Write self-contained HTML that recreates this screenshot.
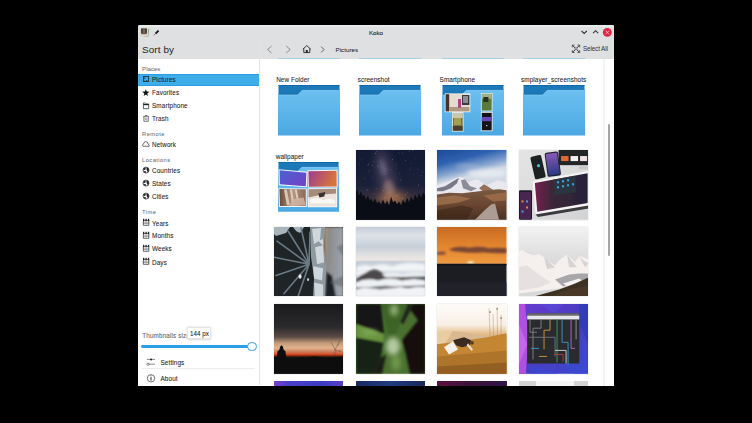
<!DOCTYPE html>
<html><head><meta charset="utf-8">
<style>
*{margin:0;padding:0;box-sizing:border-box}
html,body{width:752px;height:423px;background:#000;overflow:hidden;font-family:"Liberation Sans",sans-serif;color:#232627;position:relative}
.a{position:absolute}
.t{position:absolute;white-space:nowrap;line-height:1;-webkit-text-stroke:0.07px currentColor}
svg{position:absolute;overflow:hidden}
</style></head>
<body>

<div class="a" style="left:138px;top:25px;width:476px;height:361px;background:#ffffff;border-radius:2px 2px 0 0"></div>
<div class="a" style="left:138px;top:25px;width:476px;height:33.5px;background:#dee0e2;border-radius:2px 2px 0 0"></div>
<div class="a" style="left:138.5px;top:25px;width:475px;height:1.6px;background:#e8e9ea;border-radius:2px 2px 0 0"></div>
<div class="t" style="left:368.90px;top:29.65px;font-size:6.2px;color:#26292c;-webkit-text-stroke:0.1px currentColor;">Koko</div>
<svg style="left:576px;top:26px" width="38" height="14" viewBox="576 26 38 14">
<path d="M581.6 31 L584.2 33.5 L586.8 31" fill="none" stroke="#2e3236" stroke-width="1.05"/>
<path d="M593.1 33.2 L595.6 30.7 L598.1 33.2" fill="none" stroke="#2e3236" stroke-width="1.05"/>
<circle cx="607.3" cy="32.4" r="4.45" fill="#e0233f"/>
<path d="M605.4 30.5 L609.2 34.3 M609.2 30.5 L605.4 34.3" stroke="#f6d2d8" stroke-width="0.75"/>
</svg>
<svg style="left:139px;top:26px" width="24" height="13" viewBox="139 26 24 13">
<rect x="141" y="28.6" width="7.8" height="7.6" fill="#7a9a78" transform="rotate(8 144.4 32)"/>
<rect x="140.6" y="28.2" width="7.4" height="7.8" fill="#e9e2d6" transform="rotate(4 144.4 32)"/>
<rect x="140.5" y="28" width="7" height="7.2" fill="#d9d1c4"/>
<rect x="141.2" y="28.5" width="5.6" height="5.2" fill="#2a2522"/>
<rect x="142.6" y="29.2" width="2.8" height="4.2" fill="#7b6a5e"/>
<rect x="142.8" y="34.2" width="2.6" height="0.7" fill="#e88080"/>
<path d="M157.9 30 L159.2 31.3 L156.2 34.3 L154.9 33 Z" fill="#16191c"/>
<path d="M155.4 33.8 L153.9 35.3" stroke="#333" stroke-width="0.6"/>
</svg>
<div class="a" style="left:259px;top:40px;width:1px;height:345px;background:#e3e4e5;"></div>
<div class="t" style="left:142.10px;top:44.52px;font-size:9.9px;color:#1e2124;-webkit-text-stroke:0;letter-spacing:0.1px;">Sort by</div>
<svg style="left:262px;top:42px" width="70" height="14" viewBox="262 42 70 14">
<path d="M271.6 46 L267.6 49.5 L271.6 53" fill="none" stroke="#7b7e82" stroke-width="0.85"/>
<path d="M286.2 46 L290.2 49.5 L286.2 53" fill="none" stroke="#7b7e82" stroke-width="0.85"/>
<path d="M302.8 49.3 L306.8 45.6 L310.8 49.3 M303.8 48.5 L303.8 52.6 L309.8 52.6 L309.8 48.5" fill="none" stroke="#232627" stroke-width="0.9"/>
<rect x="305.8" y="50" width="2" height="2.7" fill="#232627"/>
<path d="M321.2 46.6 L324 49.5 L321.2 52.4" fill="none" stroke="#45494d" stroke-width="0.85"/>
</svg>
<div class="t" style="left:335.50px;top:46.75px;font-size:6.2px;color:#26292c;-webkit-text-stroke:0.05px currentColor;letter-spacing:0.05px;">Pictures</div>
<svg style="left:570px;top:42px" width="12" height="14" viewBox="570 42 12 14">
<path d="M572.8 45.6 L579.2 52 M579.2 45.6 L572.8 52" stroke="#31363b" stroke-width="1"/>
<path d="M572.3 47.3 L572.3 45.1 L574.5 45.1 M577.5 45.1 L579.7 45.1 L579.7 47.3 M579.7 50.3 L579.7 52.5 L577.5 52.5 M574.5 52.5 L572.3 52.5 L572.3 50.3" fill="none" stroke="#31363b" stroke-width="0.8"/>
<circle cx="576" cy="48.8" r="1.1" fill="#dee0e2" stroke="#31363b" stroke-width="0.5"/>
</svg>
<div class="t" style="left:583.00px;top:45.97px;font-size:6.3px;color:#2e3236;-webkit-text-stroke:0;letter-spacing:-0.12px;">Select All</div>
<div class="t" style="left:142.10px;top:66.14px;font-size:6.1px;color:#6a6e72;-webkit-text-stroke:0.04px currentColor;">Places</div>
<div class="a" style="left:138px;top:73.8px;width:121px;height:12.1px;background:#3daee9;border-top:0.7px solid #2b9de4;border-bottom:0.7px solid #2b9de4"></div>
<div class="t" style="left:152.00px;top:77.42px;font-size:6.35px;color:#232627;letter-spacing:0.12px;">Pictures</div>
<div class="t" style="left:152.00px;top:90.42px;font-size:6.35px;color:#232627;letter-spacing:0.12px;">Favorites</div>
<div class="t" style="left:152.00px;top:103.42px;font-size:6.35px;color:#232627;letter-spacing:0.12px;">Smartphone</div>
<div class="t" style="left:152.00px;top:116.42px;font-size:6.35px;color:#232627;letter-spacing:0.12px;">Trash</div>
<div class="t" style="left:152.00px;top:142.42px;font-size:6.35px;color:#232627;letter-spacing:0.12px;">Network</div>
<div class="t" style="left:152.00px;top:168.42px;font-size:6.35px;color:#232627;letter-spacing:0.12px;">Countries</div>
<div class="t" style="left:152.00px;top:181.42px;font-size:6.35px;color:#232627;letter-spacing:0.12px;">States</div>
<div class="t" style="left:152.00px;top:194.42px;font-size:6.35px;color:#232627;letter-spacing:0.12px;">Cities</div>
<div class="t" style="left:152.00px;top:220.62px;font-size:6.35px;color:#232627;letter-spacing:0.12px;">Years</div>
<div class="t" style="left:152.00px;top:233.42px;font-size:6.35px;color:#232627;letter-spacing:0.12px;">Months</div>
<div class="t" style="left:152.00px;top:246.42px;font-size:6.35px;color:#232627;letter-spacing:0.12px;">Weeks</div>
<div class="t" style="left:152.00px;top:259.52px;font-size:6.35px;color:#232627;letter-spacing:0.12px;">Days</div>
<div class="t" style="left:142.10px;top:132.19px;font-size:5.8px;color:#6a6e72;-webkit-text-stroke:0.04px currentColor;letter-spacing:0.4px;">Remote</div>
<div class="t" style="left:142.10px;top:158.19px;font-size:5.8px;color:#6a6e72;-webkit-text-stroke:0.04px currentColor;letter-spacing:0.4px;">Locations</div>
<div class="t" style="left:142.10px;top:210.29px;font-size:5.8px;color:#6a6e72;-webkit-text-stroke:0.04px currentColor;letter-spacing:0.4px;">Time</div>
<svg style="left:138px;top:70px" width="22" height="320" viewBox="138 70 22 320">
<!-- pictures -->
<rect x="143.4" y="76.5" width="5.1" height="5.1" fill="none" stroke="#1a2a33" stroke-width="0.8"/>
<path d="M143.8 78.2 L145.4 78.2" stroke="#1a2a33" stroke-width="0.9"/>
<circle cx="144.3" cy="81" r="0.6" fill="#1a2a33"/><circle cx="146.6" cy="80.5" r="0.6" fill="#1a2a33"/><circle cx="148.2" cy="81" r="0.6" fill="#1a2a33"/>
<!-- star -->
<polygon points="145.80,89.20 146.74,91.61 149.32,91.76 147.32,93.39 147.97,95.89 145.80,94.50 143.63,95.89 144.28,93.39 142.28,91.76 144.86,91.61" fill="#111"/>
<!-- folder -->
<path d="M143.4 103 L145.6 103 L146.4 103.9 L148.7 103.9 L148.7 108.7 L143.4 108.7 Z" fill="none" stroke="#232627" stroke-width="0.7"/>
<rect x="143.4" y="104" width="5.3" height="1.2" fill="#232627"/>
<!-- trash -->
<path d="M143.3 116.4 L148.9 116.4 M143.9 116.4 L143.9 121.3 L148.3 121.3 L148.3 116.4 M145 115.5 L147.2 115.5" fill="none" stroke="#3e4144" stroke-width="0.7"/>
<circle cx="146.1" cy="118.9" r="1" fill="none" stroke="#5a5d60" stroke-width="0.55"/>
<!-- cloud -->
<path d="M143 146.3 L149.2 146.3 Q149.6 144.6 148 144 Q147.8 141.6 145.7 141.5 Q144 141.6 144 143.4 Q142.4 144 142.6 145.5 Z" fill="none" stroke="#3a3d40" stroke-width="0.75" stroke-linejoin="round"/>
<circle cx="146" cy="170.1" r="3" fill="#f4f4f4" stroke="#1e2022" stroke-width="0.75"/>
<path d="M143.6 168.2 L145.3 167.7 L145.8 168.9 L144.8 169.9 L143.3 169.5 Z" fill="#1e2022"/>
<path d="M146.8 167.5 L148.4 168.5 L148.9 170.7 L147.8 172.29999999999998 L147 170.5 L146.4 168.9 Z" fill="#1e2022"/>
<path d="M144 170.9 L145.6 171.1 L146 172.7 L144.6 172.5 Z" fill="#1e2022"/><circle cx="146" cy="183.1" r="3" fill="#f4f4f4" stroke="#1e2022" stroke-width="0.75"/>
<path d="M143.6 181.2 L145.3 180.7 L145.8 181.9 L144.8 182.9 L143.3 182.5 Z" fill="#1e2022"/>
<path d="M146.8 180.5 L148.4 181.5 L148.9 183.7 L147.8 185.29999999999998 L147 183.5 L146.4 181.9 Z" fill="#1e2022"/>
<path d="M144 183.9 L145.6 184.1 L146 185.7 L144.6 185.5 Z" fill="#1e2022"/><circle cx="146" cy="196.1" r="3" fill="#f4f4f4" stroke="#1e2022" stroke-width="0.75"/>
<path d="M143.6 194.2 L145.3 193.7 L145.8 194.9 L144.8 195.9 L143.3 195.5 Z" fill="#1e2022"/>
<path d="M146.8 193.5 L148.4 194.5 L148.9 196.7 L147.8 198.29999999999998 L147 196.5 L146.4 194.9 Z" fill="#1e2022"/>
<path d="M144 196.9 L145.6 197.1 L146 198.7 L144.6 198.5 Z" fill="#1e2022"/><path d="M143.35 220.6 L148.85 220.6 L148.85 225.29999999999998 L143.35 225.29999999999998 Z" fill="none" stroke="#232627" stroke-width="0.7"/>
<rect x="143" y="218.79999999999998" width="1.3" height="2.4" fill="#232627"/><rect x="145.45" y="218.79999999999998" width="1.3" height="2.4" fill="#232627"/><rect x="147.9" y="218.79999999999998" width="1.3" height="2.4" fill="#232627"/>
<path d="M143.2 223.1 L149 223.1" stroke="#333" stroke-width="0.7"/>
<path d="M146.1 221.2 L146.1 224.99999999999997" stroke="#888" stroke-width="0.4"/><path d="M143.35 233.6 L148.85 233.6 L148.85 238.29999999999998 L143.35 238.29999999999998 Z" fill="none" stroke="#232627" stroke-width="0.7"/>
<rect x="143" y="231.79999999999998" width="1.3" height="2.4" fill="#232627"/><rect x="145.45" y="231.79999999999998" width="1.3" height="2.4" fill="#232627"/><rect x="147.9" y="231.79999999999998" width="1.3" height="2.4" fill="#232627"/>
<path d="M143.2 236.1 L149 236.1" stroke="#333" stroke-width="0.7"/>
<path d="M146.1 234.2 L146.1 237.99999999999997" stroke="#888" stroke-width="0.4"/><path d="M143.35 246.6 L148.85 246.6 L148.85 251.29999999999998 L143.35 251.29999999999998 Z" fill="none" stroke="#232627" stroke-width="0.7"/>
<rect x="143" y="244.79999999999998" width="1.3" height="2.4" fill="#232627"/><rect x="145.45" y="244.79999999999998" width="1.3" height="2.4" fill="#232627"/><rect x="147.9" y="244.79999999999998" width="1.3" height="2.4" fill="#232627"/>
<path d="M143.2 249.1 L149 249.1" stroke="#333" stroke-width="0.7"/>
<path d="M146.1 247.2 L146.1 250.99999999999997" stroke="#888" stroke-width="0.4"/><path d="M143.35 259.6 L148.85 259.6 L148.85 264.3 L143.35 264.3 Z" fill="none" stroke="#232627" stroke-width="0.7"/>
<rect x="143" y="257.8" width="1.3" height="2.4" fill="#232627"/><rect x="145.45" y="257.8" width="1.3" height="2.4" fill="#232627"/><rect x="147.9" y="257.8" width="1.3" height="2.4" fill="#232627"/>
<path d="M143.2 262.1 L149 262.1" stroke="#333" stroke-width="0.7"/>
<path d="M146.1 260.2 L146.1 264.0" stroke="#888" stroke-width="0.4"/>
<!-- settings -->
<path d="M146.8 359.4 L155 359.4 M149.1 364.2 L155 364.2" stroke="#3a3d40" stroke-width="0.6"/>
<circle cx="151.1" cy="359.4" r="1" fill="#232627"/>
<circle cx="148" cy="364.2" r="1.15" fill="#ffffff" stroke="#232627" stroke-width="0.55"/>
<!-- about -->
<circle cx="151" cy="378.3" r="3.7" fill="none" stroke="#3a3d40" stroke-width="0.7"/>
<rect x="150.55" y="377.1" width="0.9" height="3.5" fill="#111"/>
<rect x="150.55" y="375.4" width="0.9" height="0.9" fill="#333"/>
</svg>
<div class="t" style="left:142.30px;top:332.67px;font-size:6.3px;color:#5f6367;letter-spacing:0.15px;">Thumbnails size</div>
<div class="a" style="left:141px;top:345px;width:111px;height:2.8px;background:#2a9fe8;border-radius:1.4px"></div>
<div class="a" style="left:247.4px;top:341.7px;width:9.4px;height:9.4px;border-radius:50%;background:#fcfcfc;border:0.9px solid #2a9fe8"></div>
<div class="a" style="left:186.7px;top:326.6px;width:24.8px;height:12.9px;background:#ffffff;border:0.5px solid #e2e3e4;border-radius:1.2px;box-shadow:0 0.5px 2.5px rgba(0,0,0,0.16)"></div>
<div class="t" style="left:189.90px;top:330.67px;font-size:6.3px;color:#232627;">144 px</div>
<div class="a" style="left:142.3px;top:368.2px;width:113px;height:0.7px;background:#eceded;"></div>
<div class="t" style="left:160.50px;top:359.52px;font-size:6.35px;color:#232627;letter-spacing:0.12px;">Settings</div>
<div class="t" style="left:160.50px;top:376.22px;font-size:6.35px;color:#232627;letter-spacing:0.12px;">About</div>
<div class="a" style="left:277.7px;top:58.2px;width:62.2px;height:0.9px;background:#a9cfe6"></div>
<div class="a" style="left:359px;top:58.2px;width:62px;height:0.9px;background:#a9cfe6"></div>
<div class="a" style="left:441.5px;top:58.2px;width:62px;height:0.9px;background:#a9cfe6"></div>
<div class="a" style="left:523px;top:58.2px;width:62px;height:0.9px;background:#a9cfe6"></div>
<div class="t" style="left:276.20px;top:76.58px;font-size:6.4px;color:#232627;letter-spacing:0.06px">New Folder</div>
<div class="t" style="left:357.80px;top:76.58px;font-size:6.4px;color:#232627;letter-spacing:0.06px">screenshot</div>
<div class="t" style="left:439.60px;top:76.58px;font-size:6.4px;color:#232627;letter-spacing:0.06px">Smartphone</div>
<div class="t" style="left:521.10px;top:76.58px;font-size:6.4px;color:#232627;letter-spacing:0.06px">smplayer_screenshots</div>
<div class="t" style="left:275.80px;top:153.58px;font-size:6.4px;color:#232627;letter-spacing:0.06px">wallpaper</div>
<svg style="left:277px;top:84.2px" width="64.00" height="53.00" viewBox="-1 -1 64 53">
<defs><linearGradient id="fg1" x1="0" y1="0" x2="0" y2="1"><stop offset="0" stop-color="#6cc0f0"/><stop offset="1" stop-color="#4ba8e2"/></linearGradient></defs>
<rect x="0.5" y="0" width="61" height="11" fill="#1c78b7"/>
<rect x="0.5" y="0" width="61" height="0.8" fill="#0f66a8"/>
<path d="M0 9.7 L19.6 9.7 L24.2 5 L62 5 L62 50.6 L0 50.6 Z" fill="url(#fg1)"/>
<path d="M0 9.9 L19.7 9.9 L24.3 5.2 L62 5.2" fill="none" stroke="#88d0f7" stroke-width="0.6"/>
<path d="M0 9.3 L19.3 9.3 L24 4.6 L62 4.6" fill="none" stroke="#0e5f9c" stroke-width="0.5" opacity="0.6"/>

</svg>
<svg style="left:358.4px;top:84.2px" width="64.00" height="53.00" viewBox="-1 -1 64 53">
<defs><linearGradient id="fg2" x1="0" y1="0" x2="0" y2="1"><stop offset="0" stop-color="#6cc0f0"/><stop offset="1" stop-color="#4ba8e2"/></linearGradient></defs>
<rect x="0.5" y="0" width="61" height="11" fill="#1c78b7"/>
<rect x="0.5" y="0" width="61" height="0.8" fill="#0f66a8"/>
<path d="M0 9.7 L19.6 9.7 L24.2 5 L62 5 L62 50.6 L0 50.6 Z" fill="url(#fg2)"/>
<path d="M0 9.9 L19.7 9.9 L24.3 5.2 L62 5.2" fill="none" stroke="#88d0f7" stroke-width="0.6"/>
<path d="M0 9.3 L19.3 9.3 L24 4.6 L62 4.6" fill="none" stroke="#0e5f9c" stroke-width="0.5" opacity="0.6"/>

</svg>
<svg style="left:440.8px;top:84.2px" width="64.00" height="53.00" viewBox="-1 -1 64 53">
<defs><linearGradient id="fg3" x1="0" y1="0" x2="0" y2="1"><stop offset="0" stop-color="#6cc0f0"/><stop offset="1" stop-color="#4ba8e2"/></linearGradient></defs>
<rect x="0.5" y="0" width="61" height="11" fill="#1c78b7"/>
<rect x="0.5" y="0" width="61" height="0.8" fill="#0f66a8"/>
<path d="M0 9.7 L19.6 9.7 L24.2 5 L62 5 L62 50.6 L0 50.6 Z" fill="url(#fg3)"/>
<path d="M0 9.9 L19.7 9.9 L24.3 5.2 L62 5.2" fill="none" stroke="#88d0f7" stroke-width="0.6"/>
<path d="M0 9.3 L19.3 9.3 L24 4.6 L62 4.6" fill="none" stroke="#0e5f9c" stroke-width="0.5" opacity="0.6"/>

<rect x="2.8" y="8.4" width="25.5" height="18.8" fill="#f6f4f0"/>
<rect x="3.6" y="9.2" width="23.9" height="17.2" fill="#e4dcd0"/>
<rect x="3.6" y="9.2" width="3.6" height="17.2" fill="#4a3028"/>
<rect x="20" y="10" width="7.4" height="10" fill="#3a3a3c"/>
<rect x="21" y="11" width="5" height="7" fill="#8a8e90"/>
<rect x="16" y="14" width="3" height="9" fill="#b04080"/>
<rect x="7.5" y="22" width="20" height="4.4" fill="#9a7a60" opacity="0.7"/>
<rect x="10" y="27.2" width="11.5" height="19.3" fill="#f6f4f0"/>
<rect x="10.8" y="28" width="9.9" height="17.7" fill="#7a7040"/>
<rect x="10.8" y="28" width="9.9" height="5" fill="#c8c8b0"/>
<rect x="12" y="33" width="7" height="7" fill="#a0a050"/>
<rect x="10.8" y="41" width="9.9" height="4.7" fill="#4a4028"/>
<g transform="translate(38.9 8)">
<rect x="0" y="0" width="11.6" height="18.4" fill="#f6f4f0"/>
<rect x="0.8" y="0.8" width="10" height="16.8" fill="#5a7a38"/>
<rect x="0.8" y="0.8" width="10" height="5" fill="#a0b088"/>
<rect x="2.5" y="4" width="5" height="5" fill="#2a3020"/>
</g>
<g transform="translate(38.9 27)">
<rect x="0" y="0" width="11.6" height="19.2" fill="#f6f4f0"/>
<rect x="0.8" y="0.8" width="10" height="17.6" fill="#141418"/>
<rect x="0.8" y="5" width="10" height="4.2" fill="#6a48b8"/>
<rect x="5.2" y="13" width="1.2" height="1.2" fill="#ddd"/>
</g>
</svg>
<svg style="left:521.9px;top:84.2px" width="64.00" height="53.00" viewBox="-1 -1 64 53">
<defs><linearGradient id="fg4" x1="0" y1="0" x2="0" y2="1"><stop offset="0" stop-color="#6cc0f0"/><stop offset="1" stop-color="#4ba8e2"/></linearGradient></defs>
<rect x="0.5" y="0" width="61" height="11" fill="#1c78b7"/>
<rect x="0.5" y="0" width="61" height="0.8" fill="#0f66a8"/>
<path d="M0 9.7 L19.6 9.7 L24.2 5 L62 5 L62 50.6 L0 50.6 Z" fill="url(#fg4)"/>
<path d="M0 9.9 L19.7 9.9 L24.3 5.2 L62 5.2" fill="none" stroke="#88d0f7" stroke-width="0.6"/>
<path d="M0 9.3 L19.3 9.3 L24 4.6 L62 4.6" fill="none" stroke="#0e5f9c" stroke-width="0.5" opacity="0.6"/>

</svg>
<svg style="left:277.4px;top:161.3px" width="63.04" height="52.20" viewBox="-1 -1 64 53">
<defs><linearGradient id="fg5" x1="0" y1="0" x2="0" y2="1"><stop offset="0" stop-color="#6cc0f0"/><stop offset="1" stop-color="#4ba8e2"/></linearGradient></defs>
<rect x="0.5" y="0" width="61" height="11" fill="#1c78b7"/>
<rect x="0.5" y="0" width="61" height="0.8" fill="#0f66a8"/>
<path d="M0 9.7 L19.6 9.7 L24.2 5 L62 5 L62 50.6 L0 50.6 Z" fill="url(#fg5)"/>
<path d="M0 9.9 L19.7 9.9 L24.3 5.2 L62 5.2" fill="none" stroke="#88d0f7" stroke-width="0.6"/>
<path d="M0 9.3 L19.3 9.3 L24 4.6 L62 4.6" fill="none" stroke="#0e5f9c" stroke-width="0.5" opacity="0.6"/>

<defs>
<linearGradient id="w1" x1="0" y1="0" x2="1" y2="1"><stop offset="0" stop-color="#4a62d4"/><stop offset="1" stop-color="#7440c4"/></linearGradient>
<linearGradient id="w2" x1="0" y1="0" x2="1" y2="0.3"><stop offset="0" stop-color="#9c3a94"/><stop offset="1" stop-color="#d8743c"/></linearGradient>
<linearGradient id="w3" x1="0" y1="0" x2="1" y2="0"><stop offset="0" stop-color="#6a4a38"/><stop offset="0.5" stop-color="#b89880"/><stop offset="1" stop-color="#8a6a58"/></linearGradient>
</defs>
<path d="M0.6 7.4 L29.8 10 L29.2 25.6 L0.9 23.6 Z" fill="#f6f6f6"/>
<path d="M1.6 8.5 L28.8 10.9 L28.2 24.6 L1.9 22.6 Z" fill="url(#w1)"/>
<path d="M30 8.4 L60.4 7.8 L60.6 25.8 L30.4 26 Z" fill="#f6f6f6"/>
<path d="M30.9 9.3 L59.5 8.8 L59.6 24.8 L31.3 25.1 Z" fill="url(#w2)"/>
<path d="M0.5 26.6 L29.2 26.9 L29.2 45.6 L1 45.8 Z" fill="#f6f6f6"/>
<path d="M1.5 27.5 L28.2 27.8 L28.2 44.6 L2 44.7 Z" fill="url(#w3)"/>
<path d="M6 28 L9 28 L12 44 L9 44 Z M12 28 L14 28 L16 40 L14 40 Z M17 28 L19 28 L21 38 L19 38 Z" fill="#e8dcd0" opacity="0.8"/>
<path d="M14 38 L26 36 L28 44 L12 44.6 Z" fill="#d4b8a8" opacity="0.8"/>
<path d="M30 26.8 L59.9 26.3 L60.1 45.9 L30.2 45.9 Z" fill="#f6f6f6"/>
<path d="M31 27.6 L59 27.2 L59.1 44.9 L31.1 44.9 Z" fill="#ece4dc"/>
<path d="M31 27.6 L59 27.2 L59 32 L45 33 L31 36 Z" fill="#9a7a68" opacity="0.85"/>
<path d="M41 32 L48 30.5 L47 35 L42 36 Z" fill="#3a3030"/>
<path d="M33 38 Q40 35 46 39 Q52 36 58 39 L58 42 L33 42 Z" fill="#faf8f6"/>

</svg>
<div class="a" style="left:356px;top:150px;width:69px;height:70px;box-shadow:0 0.3px 1.2px rgba(0,0,0,0.22)"></div>
<svg style="left:355.85px;top:149.9px" width="69.5" height="69.8" viewBox="0 0 69.4 69.2" preserveAspectRatio="none">
<defs>
<linearGradient id="mw" x1="0" y1="0" x2="0" y2="1"><stop offset="0" stop-color="#121a34"/><stop offset="0.5" stop-color="#1a2038"/><stop offset="0.7" stop-color="#3a3040"/><stop offset="0.8" stop-color="#2a2228"/><stop offset="1" stop-color="#0e0e18"/></linearGradient>
<filter id="b3" x="-80%" y="-80%" width="260%" height="260%"><feGaussianBlur stdDeviation="4"/></filter>
<filter id="b2" x="-80%" y="-80%" width="260%" height="260%"><feGaussianBlur stdDeviation="2"/></filter>
</defs>
<rect width="69.4" height="69.2" fill="url(#mw)"/>
<ellipse cx="30" cy="28" rx="9" ry="30" fill="#5a4a66" opacity="0.6" transform="rotate(-12 30 28)" filter="url(#b3)"/>
<ellipse cx="27" cy="18" rx="3" ry="9" fill="#8a88a8" opacity="0.5" transform="rotate(-12 27 18)" filter="url(#b2)"/>
<ellipse cx="33" cy="38" rx="5" ry="9" fill="#a88a80" opacity="0.6" transform="rotate(-12 33 38)" filter="url(#b2)"/>
<ellipse cx="36" cy="48" rx="14" ry="6" fill="#b87a48" opacity="0.8" filter="url(#b3)"/>
<circle cx="16.4" cy="27.2" r="0.29" fill="#cfd4ea" opacity="0.60"/><circle cx="43.2" cy="3.3" r="0.20" fill="#cfd4ea" opacity="0.72"/><circle cx="17.9" cy="11.7" r="0.45" fill="#cfd4ea" opacity="0.54"/><circle cx="57.7" cy="23.8" r="0.36" fill="#cfd4ea" opacity="0.38"/><circle cx="43.8" cy="43.4" r="0.33" fill="#cfd4ea" opacity="0.67"/><circle cx="46.3" cy="3.2" r="0.39" fill="#cfd4ea" opacity="0.60"/><circle cx="20.8" cy="1.6" r="0.42" fill="#cfd4ea" opacity="0.54"/><circle cx="49.6" cy="43.9" r="0.38" fill="#cfd4ea" opacity="0.76"/><circle cx="27.3" cy="40.0" r="0.31" fill="#cfd4ea" opacity="0.77"/><circle cx="60.6" cy="4.9" r="0.23" fill="#cfd4ea" opacity="0.41"/><circle cx="66.6" cy="21.8" r="0.36" fill="#cfd4ea" opacity="0.45"/><circle cx="35.0" cy="19.3" r="0.29" fill="#cfd4ea" opacity="0.59"/><circle cx="40.3" cy="45.2" r="0.37" fill="#cfd4ea" opacity="0.76"/><circle cx="59.1" cy="49.5" r="0.37" fill="#cfd4ea" opacity="0.38"/><circle cx="59.4" cy="48.2" r="0.43" fill="#cfd4ea" opacity="0.58"/><circle cx="49.3" cy="10.6" r="0.41" fill="#cfd4ea" opacity="0.59"/><circle cx="19.7" cy="3.2" r="0.41" fill="#cfd4ea" opacity="0.79"/><circle cx="6.1" cy="40.0" r="0.30" fill="#cfd4ea" opacity="0.38"/><circle cx="20.3" cy="38.4" r="0.42" fill="#cfd4ea" opacity="0.32"/><circle cx="42.4" cy="2.2" r="0.38" fill="#cfd4ea" opacity="0.47"/><circle cx="60.8" cy="49.0" r="0.33" fill="#cfd4ea" opacity="0.80"/><circle cx="21.4" cy="3.8" r="0.35" fill="#cfd4ea" opacity="0.32"/><circle cx="13.6" cy="20.4" r="0.35" fill="#cfd4ea" opacity="0.38"/><circle cx="2.9" cy="43.4" r="0.28" fill="#cfd4ea" opacity="0.78"/><circle cx="61.9" cy="18.9" r="0.32" fill="#cfd4ea" opacity="0.56"/><circle cx="44.4" cy="29.8" r="0.34" fill="#cfd4ea" opacity="0.61"/><circle cx="64.9" cy="25.4" r="0.31" fill="#cfd4ea" opacity="0.66"/><circle cx="16.4" cy="15.1" r="0.44" fill="#cfd4ea" opacity="0.56"/><circle cx="37.8" cy="0.6" r="0.30" fill="#cfd4ea" opacity="0.59"/><circle cx="1.4" cy="30.8" r="0.36" fill="#cfd4ea" opacity="0.33"/><circle cx="43.3" cy="23.3" r="0.37" fill="#cfd4ea" opacity="0.48"/><circle cx="48.8" cy="36.9" r="0.21" fill="#cfd4ea" opacity="0.33"/><circle cx="46.6" cy="48.2" r="0.26" fill="#cfd4ea" opacity="0.53"/><circle cx="40.9" cy="16.0" r="0.29" fill="#cfd4ea" opacity="0.46"/><circle cx="25.5" cy="29.8" r="0.28" fill="#cfd4ea" opacity="0.49"/><circle cx="53.3" cy="1.3" r="0.34" fill="#cfd4ea" opacity="0.67"/><circle cx="21.4" cy="11.1" r="0.40" fill="#cfd4ea" opacity="0.42"/><circle cx="12.9" cy="21.8" r="0.37" fill="#cfd4ea" opacity="0.35"/><circle cx="22.2" cy="16.7" r="0.41" fill="#cfd4ea" opacity="0.52"/><circle cx="59.0" cy="8.5" r="0.28" fill="#cfd4ea" opacity="0.63"/><circle cx="61.1" cy="22.6" r="0.26" fill="#cfd4ea" opacity="0.36"/><circle cx="36.5" cy="9.5" r="0.40" fill="#cfd4ea" opacity="0.72"/><circle cx="12.7" cy="13.9" r="0.40" fill="#cfd4ea" opacity="0.62"/><circle cx="55.6" cy="17.3" r="0.23" fill="#cfd4ea" opacity="0.45"/><circle cx="54.8" cy="13.6" r="0.29" fill="#cfd4ea" opacity="0.51"/><circle cx="29.0" cy="20.5" r="0.43" fill="#cfd4ea" opacity="0.38"/><circle cx="0.3" cy="47.2" r="0.42" fill="#cfd4ea" opacity="0.79"/><circle cx="30.0" cy="47.5" r="0.43" fill="#cfd4ea" opacity="0.41"/><circle cx="51.4" cy="41.8" r="0.37" fill="#cfd4ea" opacity="0.56"/><circle cx="19.9" cy="17.1" r="0.26" fill="#cfd4ea" opacity="0.33"/><circle cx="40.6" cy="14.4" r="0.40" fill="#cfd4ea" opacity="0.32"/><circle cx="62.3" cy="34.7" r="0.43" fill="#cfd4ea" opacity="0.75"/><circle cx="62.1" cy="28.8" r="0.20" fill="#cfd4ea" opacity="0.67"/><circle cx="11.9" cy="15.0" r="0.37" fill="#cfd4ea" opacity="0.56"/><circle cx="28.5" cy="47.0" r="0.35" fill="#cfd4ea" opacity="0.47"/><circle cx="17.4" cy="43.1" r="0.32" fill="#cfd4ea" opacity="0.69"/><circle cx="24.3" cy="9.9" r="0.33" fill="#cfd4ea" opacity="0.71"/><circle cx="11.8" cy="39.6" r="0.43" fill="#cfd4ea" opacity="0.70"/><circle cx="56.8" cy="0.4" r="0.36" fill="#cfd4ea" opacity="0.73"/><circle cx="3.4" cy="13.6" r="0.27" fill="#cfd4ea" opacity="0.56"/><circle cx="29.2" cy="23.6" r="0.39" fill="#cfd4ea" opacity="0.30"/><circle cx="3.8" cy="6.3" r="0.23" fill="#cfd4ea" opacity="0.33"/><circle cx="67.3" cy="42.7" r="0.22" fill="#cfd4ea" opacity="0.55"/><circle cx="21.8" cy="15.7" r="0.29" fill="#cfd4ea" opacity="0.62"/><circle cx="40.5" cy="18.0" r="0.25" fill="#cfd4ea" opacity="0.46"/><circle cx="8.5" cy="27.8" r="0.38" fill="#cfd4ea" opacity="0.49"/><circle cx="5.5" cy="8.9" r="0.29" fill="#cfd4ea" opacity="0.60"/><circle cx="54.0" cy="19.0" r="0.40" fill="#cfd4ea" opacity="0.61"/><circle cx="29.8" cy="18.6" r="0.32" fill="#cfd4ea" opacity="0.65"/><circle cx="29.0" cy="34.7" r="0.32" fill="#cfd4ea" opacity="0.42"/>
<path d="M0 69.2 L0 42 L1.5 39 L3 45 L5 41 L6.5 46 L8 44 L10 49 L12 45 L13.5 50 L15 48 L17 52 L19 48 L21 53 L23 51 L25 54 L27 49 L29 54 L31 50 L33 55 L35 46 L37 52 L39 50 L41 54 L43 51 L45 55 L47 49 L49 53 L51 47 L53 52 L55 46 L57 50 L59 44 L61 48 L63 43 L65 47 L67 42 L69.4 45 L69.4 69.2 Z" fill="#0a0c16"/>
</svg>
<div class="a" style="left:437px;top:150px;width:70px;height:70px;box-shadow:0 0.3px 1.2px rgba(0,0,0,0.22)"></div>
<svg style="left:437.25px;top:149.9px" width="69.5" height="69.8" viewBox="0 0 69.4 69.2" preserveAspectRatio="none">
<defs>
<linearGradient id="sky2" x1="0" y1="0" x2="0.25" y2="1"><stop offset="0" stop-color="#1a4a98"/><stop offset="0.2" stop-color="#2e62b0"/><stop offset="0.36" stop-color="#86a4d0"/><stop offset="0.46" stop-color="#d0d8e4"/></linearGradient>
<linearGradient id="gr2" x1="0" y1="0" x2="0" y2="1"><stop offset="0" stop-color="#7a5a44"/><stop offset="0.5" stop-color="#6a4630"/><stop offset="1" stop-color="#4a3022"/></linearGradient>
<filter id="bm" x="-20%" y="-20%" width="140%" height="140%"><feGaussianBlur stdDeviation="0.55"/></filter>
<filter id="bm2" x="-50%" y="-50%" width="200%" height="200%"><feGaussianBlur stdDeviation="2"/></filter>
</defs>
<rect width="69.4" height="69.2" fill="url(#sky2)"/>
<ellipse cx="50" cy="23" rx="20" ry="4" fill="#eef0f4" opacity="0.75" filter="url(#bm2)"/>
<ellipse cx="30" cy="16" rx="12" ry="2" fill="#a8bcd8" opacity="0.6" filter="url(#bm2)"/>
<g filter="url(#bm)">
<path d="M0 35 L6 33 L12 31 L18 28 L23 26.5 L27 28 L31 32 L36 30 L40 29 L45 32 L50 35 L56 32 L61 30 L66 31 L69.4 33 L69.4 46 L0 46 Z" fill="#e8e8ee"/>
<path d="M0 38 L8 36 L16 31 L22 27.5 L20 33 L14 38 L6 41 L0 41 Z" fill="#4a4c5c" opacity="0.7"/>
<path d="M24 30 L28 29 L33 36 L40 38 L34 41 L26 38 Z" fill="#5a5a6a" opacity="0.65"/>
<path d="M42 38 L47 34 L52 37 L58 41 L50 44 Z" fill="#8a6448" opacity="0.9"/>
<path d="M0 44 L12 42.5 L25 43 L38 41.5 L50 40 L62 39 L69.4 40 L69.4 69.2 L0 69.2 Z" fill="url(#gr2)"/>
<path d="M0 47 L18 45 L34 48 L22 52 L0 55 Z" fill="#b08058" opacity="0.6"/>
<path d="M46 45 L69.4 42 L69.4 50 L56 51 Z" fill="#b07850" opacity="0.6"/>
<path d="M0 60 L25 55 L36 58 L30 69.2 L0 69.2 Z" fill="#3a2418" opacity="0.55"/>
<path d="M38 69.2 Q47 60 54 54 L58 53 Q60 62 62 69.2 Z" fill="#ac9c94"/>
</g>
</svg>
<div class="a" style="left:519px;top:150px;width:69px;height:70px;box-shadow:0 0.3px 1.2px rgba(0,0,0,0.22)"></div>
<svg style="left:518.95px;top:149.9px" width="69.5" height="69.8" viewBox="0 0 69.4 69.2" preserveAspectRatio="none">
<defs><filter id="bp" x="-20%" y="-20%" width="140%" height="140%"><feGaussianBlur stdDeviation="0.45"/></filter>
<linearGradient id="pbg" x1="0" y1="0" x2="1" y2="1"><stop offset="0" stop-color="#e4e4e4"/><stop offset="1" stop-color="#d2d3d4"/></linearGradient>
<linearGradient id="scr" x1="0" y1="0" x2="1" y2="0"><stop offset="0" stop-color="#74204c"/><stop offset="0.35" stop-color="#3a2838"/><stop offset="1" stop-color="#262238"/></linearGradient>
<linearGradient id="ph2" x1="0" y1="0" x2="0" y2="1"><stop offset="0" stop-color="#8a58b8"/><stop offset="1" stop-color="#2a3a80"/></linearGradient></defs>
<rect width="69.4" height="69.2" fill="url(#pbg)"/>
<g filter="url(#bp)">
<rect x="13.5" y="5.5" width="11" height="23" rx="1.8" fill="#1e2124" transform="rotate(-13 19 17)"/>
<circle cx="19.5" cy="15.5" r="1.6" fill="#40c0d0"/>
<rect x="27" y="2" width="13.5" height="24" rx="1.8" fill="#1e2230" transform="rotate(-8 33.7 14)"/>
<rect x="28" y="3.2" width="11.5" height="21.6" rx="1" fill="url(#ph2)" transform="rotate(-8 33.7 14)"/>
<rect x="39.5" y="0" width="29.9" height="15" fill="#242528"/>
<rect x="42" y="6" width="7.5" height="5" fill="#e06a30"/>
<rect x="51.5" y="6" width="7.5" height="5" fill="#f2f2f2"/>
<rect x="61" y="6" width="7" height="5" fill="#f2e2e4"/>
<rect x="60" y="16" width="9.4" height="3" fill="#c8c8cc"/>
<path d="M13.5 31 L69.4 20.5 L69.4 55 L16.5 64 Z" fill="#f4f4f4"/>
<path d="M15.8 32.6 L68.5 23 L68.5 52.6 L18.3 61.3 Z" fill="url(#scr)"/>
<path d="M34 29.5 L56 25.5 L57 42 L35 45 Z" fill="#2c3440"/>
<g fill="#3aa8e8"><rect x="38" y="31" width="2" height="2"/><rect x="43" y="30" width="2" height="2"/><rect x="48" y="29" width="2" height="2"/><rect x="38" y="36" width="2" height="2"/><rect x="43" y="35" width="2" height="2"/><rect x="48" y="34" width="2" height="2"/><rect x="53" y="33" width="2" height="2"/></g>
<path d="M16.5 64 L69.4 55 L69.4 58 L19 66.5 Z" fill="#3a3a3e"/>
<rect x="0" y="40" width="13" height="29.2" rx="1.2" fill="#1e1a28"/>
<rect x="1" y="41.5" width="11" height="27" fill="#4a2850"/>
<g fill="#e88040"><rect x="2.5" y="50" width="2" height="2"/><rect x="7" y="56" width="2" height="2"/></g>
<g fill="#40a0e8"><rect x="7" y="50" width="2" height="2"/><rect x="2.5" y="60" width="2" height="2"/></g>
</g>
</svg>
<div class="a" style="left:274px;top:227px;width:69px;height:69px;box-shadow:0 0.3px 1.2px rgba(0,0,0,0.22)"></div>
<svg style="left:273.95px;top:226.65px" width="69.5" height="69.8" viewBox="0 0 69.4 69.2" preserveAspectRatio="none">
<defs><filter id="bi" x="-20%" y="-20%" width="140%" height="140%"><feGaussianBlur stdDeviation="0.6"/></filter>
<filter id="bi2" x="-20%" y="-20%" width="140%" height="140%"><feGaussianBlur stdDeviation="1.2"/></filter>
<linearGradient id="isky" x1="0" y1="0" x2="1" y2="0.2"><stop offset="0" stop-color="#c8945a"/><stop offset="0.25" stop-color="#8a8a8c"/><stop offset="1" stop-color="#9ea4aa"/></linearGradient></defs>
<rect width="69.4" height="69.2" fill="#1f2427"/>
<g filter="url(#bi2)">
<rect x="50" y="0" width="19.4" height="69.2" fill="url(#isky)"/>
<path d="M52 44 L58 48 L62 69.2 L51 69.2 Z" fill="#1e242c"/>
<path d="M63 20 L69.4 16 L69.4 30 Z M56 55 L69 48 L69.4 60 Z" fill="#6a7078" opacity="0.7"/>
</g>
<g filter="url(#bi)">
<path d="M36 0 L51 0 L50 20 L52 40 L51 69.2 L39 69.2 L40 50 L37 30 Z" fill="#8e9aa2"/>
<path d="M38 2 L47 1 L46 13 L40 17 Z M41 20 L49 18 L50 35 L43 37 Z M39 39 L49 41 L48 53 L40 51 Z M40 55 L49 57 L49 69 L41 69 Z M44 14 L49 12 L49 18 Z" fill="#cfd7dc"/>
<path d="M0 0 L16 0 L12 6 L2 9 L0 7 Z M19 0 L30 0 L26 6 L22 4 Z" fill="#a9b4ba"/>
<g stroke="#6a7a84" stroke-width="1.6" fill="none" stroke-linecap="round">
<path d="M35 37 L3 14 M35 37 L0 30 M35 37 L2 48 M35 37 L10 66 M35 37 L24 69 M35 37 L14 4 M35 37 L27 1 M35 37 L36 5"/>
</g>
<ellipse cx="26" cy="49" rx="1.5" ry="2.2" fill="#e6ecf0"/>
<ellipse cx="34" cy="52" rx="1" ry="1.5" fill="#d0d8dc"/>
</g>
</svg>
<div class="a" style="left:356px;top:227px;width:69px;height:69px;box-shadow:0 0.3px 1.2px rgba(0,0,0,0.22)"></div>
<svg style="left:355.85px;top:226.65px" width="69.5" height="69.8" viewBox="0 0 69.4 69.2" preserveAspectRatio="none">
<defs><filter id="bc" x="-20%" y="-20%" width="140%" height="140%"><feGaussianBlur stdDeviation="0.8"/></filter>
<filter id="bc2" x="-20%" y="-20%" width="140%" height="140%"><feGaussianBlur stdDeviation="1.4"/></filter>
<linearGradient id="csky" x1="0" y1="0" x2="0" y2="1"><stop offset="0" stop-color="#c4ccd8"/><stop offset="0.12" stop-color="#dde2e8"/><stop offset="0.28" stop-color="#c6ced8"/><stop offset="0.4" stop-color="#e0e0e2"/><stop offset="0.47" stop-color="#ece6e2"/><stop offset="0.5" stop-color="#c4ccd8"/><stop offset="1" stop-color="#c8d0da"/></linearGradient></defs>
<rect width="69.4" height="69.2" fill="url(#csky)"/>
<g filter="url(#bc2)">
<path d="M0 40 Q8 36 16 39 Q26 35 36 39 Q50 33 69.4 37 L69.4 44 L0 44 Z" fill="#f2f4f6"/>
</g>
<g filter="url(#bc)">
<path d="M0 52 L6 47 L12 44 L18 42 L22 43 L27 46 L34 48 L44 47 L54 48 L62 49 L69.4 48 L69.4 60 L0 62 Z" fill="#4e4a4c"/>
<path d="M50 50 L69.4 49 L69.4 56 L54 56 Z" fill="#3a404c"/>
<path d="M0 44 Q6 41 12 44 L4 48 L0 48 Z" fill="#eef0f4"/>
<path d="M26 47 Q36 43 46 46 Q56 43 69.4 45 L69.4 49 L30 50 Z" fill="#e8ecf0"/>
<path d="M0 55 Q10 50 22 53 Q34 49 46 53 Q58 50 69.4 53 L69.4 58 L0 60 Z" fill="#eef1f4"/>
<path d="M0 62 Q12 58 24 61 Q38 57 52 61 Q62 58 69.4 60 L69.4 69.2 L0 69.2 Z" fill="#f0f2f5"/>
<path d="M8 60 L30 58 L44 60 L24 62 Z" fill="#5a5658" opacity="0.7"/>
</g>
</svg>
<div class="a" style="left:437px;top:227px;width:70px;height:69px;box-shadow:0 0.3px 1.2px rgba(0,0,0,0.22)"></div>
<svg style="left:437.25px;top:226.65px" width="69.5" height="69.8" viewBox="0 0 69.4 69.2" preserveAspectRatio="none">
<defs><linearGradient id="ss" x1="0" y1="0" x2="0" y2="1"><stop offset="0" stop-color="#c96a22"/><stop offset="0.5" stop-color="#e2852e"/><stop offset="1" stop-color="#f09a40"/></linearGradient>
<filter id="bs" x="-20%" y="-50%" width="140%" height="200%"><feGaussianBlur stdDeviation="0.8"/></filter></defs>
<rect width="69.4" height="36.5" fill="url(#ss)"/>
<g filter="url(#bs)">
<path d="M12 22 Q22 18 32 20.5 Q42 18.5 52 21 Q60 20 69.4 21 L69.4 26 Q56 26.5 46 25 Q34 26.5 22 24.5 Q14 24 12 22 Z" fill="#7a4632"/>
<path d="M0 25 Q5 23.5 9 25 L8 27.5 L0 27.5 Z" fill="#84503a"/>
<ellipse cx="33.5" cy="35.5" rx="3.2" ry="1.6" fill="#fff2c8"/>
</g>
<rect y="36.5" width="69.4" height="32.7" fill="#1c1d23"/>
<rect y="36.5" width="69.4" height="1.5" fill="#111217"/>
<rect y="55" width="69.4" height="14.2" fill="#22232a" opacity="0.8"/>
</svg>
<div class="a" style="left:519px;top:227px;width:69px;height:69px;box-shadow:0 0.3px 1.2px rgba(0,0,0,0.22)"></div>
<svg style="left:518.95px;top:226.65px" width="69.5" height="69.8" viewBox="0 0 69.4 69.2" preserveAspectRatio="none">
<defs><filter id="bw" x="-20%" y="-20%" width="140%" height="140%"><feGaussianBlur stdDeviation="0.7"/></filter>
<linearGradient id="wsky" x1="0" y1="0" x2="0" y2="1"><stop offset="0" stop-color="#f2f2f2"/><stop offset="0.45" stop-color="#dcdcdc"/><stop offset="1" stop-color="#d8d8d8"/></linearGradient></defs>
<rect width="69.4" height="69.2" fill="url(#wsky)"/>
<g filter="url(#bw)">
<path d="M0 24 L3 22.5 L8 26 L14 28 L20 27 L25 30 L30 35 L36 38 L40 33 L44 30 L48 27 L52 31 L56 35 L60 29 L64 30 L69.4 32 L69.4 54 L40 61 L0 66 Z" fill="#f5f0ee"/>
<path d="M25 30 L30 35 L36 40 L28 42 Z M48 27 L52 33 L58 40 L50 40 Z M60 29 L64 33 L69.4 36 L66 40 Z" fill="#cfcbcc" opacity="0.8"/>
<path d="M0 40 L8 38 L16 44 L24 50 L32 55 L20 60 L0 63 Z" fill="#e2dcdc" opacity="0.8"/>
<path d="M36 52 L50 47 L60 46 L69.4 46 L69.4 52 L44 59 Z" fill="#a8a6a8"/>
<path d="M44 56 L60 51 L64 54 L50 60 Z" fill="#f4f2f2"/>
<path d="M14 69.2 L40 62 L56 56 L69.4 50 L69.4 69.2 Z" fill="#3e3024"/>
<path d="M30 69.2 L50 62 L69.4 58 L69.4 69.2 Z" fill="#54402a" opacity="0.6"/>
</g>
</svg>
<div class="a" style="left:274px;top:304px;width:69px;height:70px;box-shadow:0 0.3px 1.2px rgba(0,0,0,0.22)"></div>
<svg style="left:273.95px;top:303.8px" width="69.5" height="69.8" viewBox="0 0 69.4 69.2" preserveAspectRatio="none">
<defs><linearGradient id="sil" x1="0" y1="0" x2="0" y2="1"><stop offset="0" stop-color="#1a1a1c"/><stop offset="0.33" stop-color="#2a2a2c"/><stop offset="0.47" stop-color="#5a4a44"/><stop offset="0.56" stop-color="#c49a7a"/><stop offset="0.63" stop-color="#e2b48c"/><stop offset="0.69" stop-color="#c87858"/><stop offset="0.72" stop-color="#e04a20"/><stop offset="0.75" stop-color="#5a2010"/><stop offset="0.77" stop-color="#0e0e0e"/></linearGradient>
<filter id="bsl" x="-20%" y="-20%" width="140%" height="140%"><feGaussianBlur stdDeviation="0.5"/></filter></defs>
<rect width="69.4" height="69.2" fill="url(#sil)"/>

<g filter="url(#bsl)">
<path d="M0 53 L20 54 L40 52 L55 53 L69.4 52 L69.4 69.2 L0 69.2 Z" fill="#0d0d0d"/>
<path d="M2.5 56 L3.5 47 L5.5 45 L6 42.5 L7.5 41 L9 42.5 L9.5 45 L11.5 47 L12.5 56 Z" fill="#0d0d0d"/>
<path d="M57 38 L61 45 L65 39 M60.5 53 L61 44 M61 46 L67 47 M63 41 L66 36" stroke="#3a3030" stroke-width="0.45" fill="none" opacity="0.8"/>
</g>
</svg>
<div class="a" style="left:356px;top:304px;width:69px;height:70px;box-shadow:0 0.3px 1.2px rgba(0,0,0,0.22)"></div>
<svg style="left:355.85px;top:303.8px" width="69.5" height="69.8" viewBox="0 0 69.4 69.2" preserveAspectRatio="none">
<defs><filter id="bf" x="-20%" y="-20%" width="140%" height="140%"><feGaussianBlur stdDeviation="0.8"/></filter>
<filter id="bf2" x="-50%" y="-50%" width="200%" height="200%"><feGaussianBlur stdDeviation="2.5"/></filter></defs>
<rect width="69.4" height="69.2" fill="#4a7030"/>
<g filter="url(#bf)">
<path d="M25 0 L52 0 L46 14 L40 30 L32 30 Z" fill="#3e6428"/>
<path d="M0 0 L25 0 L28 30 L0 20 Z" fill="#121712"/>
<path d="M0 33 L27 38 L25 52 L17 69.2 L0 69.2 Z" fill="#152016"/>
<path d="M50 0 L69.4 0 L69.4 69.2 L54 69.2 L50 50 L46 36 L62 16 Z" fill="#14110e"/>
<path d="M52 0 L58 0 L47 20 L44 18 Z" fill="#22201a"/>
<path d="M17 69.2 L24 54 L30 50 L26 69.2 Z" fill="#1a1c14"/>
<path d="M0 20 L28 30 L27 38 L0 33 Z" fill="#6a9440"/>
</g>
<ellipse cx="37" cy="42" rx="7" ry="9" fill="#d8e8c8" opacity="0.75" filter="url(#bf2)"/>
<ellipse cx="38" cy="6" rx="4" ry="6" fill="#b8d0a0" opacity="0.7" filter="url(#bf2)"/>
<ellipse cx="40" cy="58" rx="5" ry="8" fill="#8ab060" opacity="0.6" filter="url(#bf2)"/>
<ellipse cx="14" cy="28" rx="8" ry="3" fill="#8ab860" opacity="0.6" filter="url(#bf2)"/>
</svg>
<div class="a" style="left:437px;top:304px;width:70px;height:70px;box-shadow:0 0.3px 1.2px rgba(0,0,0,0.22)"></div>
<svg style="left:437.25px;top:303.8px" width="69.5" height="69.8" viewBox="0 0 69.4 69.2" preserveAspectRatio="none">
<defs><linearGradient id="gf" x1="0" y1="0" x2="0" y2="1"><stop offset="0" stop-color="#fdfbf8"/><stop offset="0.3" stop-color="#f8efe4"/><stop offset="0.42" stop-color="#e6c090"/><stop offset="0.6" stop-color="#c88a38"/><stop offset="1" stop-color="#9a6428"/></linearGradient>
<filter id="bg" x="-20%" y="-20%" width="140%" height="140%"><feGaussianBlur stdDeviation="0.7"/></filter></defs>
<rect width="69.4" height="69.2" fill="url(#gf)"/>
<g filter="url(#bg)">
<path d="M0 29 L12 26.5 L28 28 L44 31 L69.4 31 L69.4 40 L0 42 Z" fill="#d8b890"/>
<path d="M0 26 L16 26 L8 40 L0 44 Z" fill="#f2d4a8" opacity="0.7"/>
<path d="M0 40 L30 36 L50 33 L69.4 29 L69.4 69.2 L0 69.2 Z" fill="#c48632"/>
<path d="M0 52 L69.4 46 L69.4 69.2 L0 69.2 Z" fill="#a06a28" opacity="0.6"/>
<path d="M0 62 L69.4 58 L69.4 69.2 L0 69.2 Z" fill="#7a4a1c" opacity="0.5"/>
<path d="M7 43 L16 37 L21 45 L12 50 Z" fill="#f4f0ec"/>
<path d="M16 36 L27 33 L34 36 L33 41 L25 43 L19 41 Z" fill="#3a2a20"/>
<path d="M31 39 L36 45 L34.5 46.5 L29.5 41 Z" fill="#ecdcd0"/>
<circle cx="35" cy="38.5" r="1.8" fill="#5a3a28"/>
<path d="M52 4 L53 33 M56 10 L56.5 34 M60 3 L60.5 33 M64 11 L64 32" stroke="#b08050" stroke-width="0.5" opacity="0.8"/>
<circle cx="53" cy="8" r="0.8" fill="#8a5a38"/><circle cx="60" cy="5" r="0.8" fill="#8a5a38"/><circle cx="64" cy="14" r="0.8" fill="#8a5a38"/>
</g>
</svg>
<div class="a" style="left:519px;top:304px;width:69px;height:70px;box-shadow:0 0.3px 1.2px rgba(0,0,0,0.22)"></div>
<svg style="left:518.95px;top:303.8px" width="69.5" height="69.8" viewBox="0 0 69.4 69.2" preserveAspectRatio="none">
<defs><linearGradient id="pw" x1="0" y1="0" x2="1" y2="1"><stop offset="0" stop-color="#6a3cd0"/><stop offset="0.5" stop-color="#4a3cc0"/><stop offset="1" stop-color="#3a4ad0"/></linearGradient>
<filter id="bpw" x="-20%" y="-20%" width="140%" height="140%"><feGaussianBlur stdDeviation="0.3"/></filter></defs>
<rect width="69.4" height="69.2" fill="url(#pw)"/>
<path d="M0 0 L6 0 L9 30 L7 69.2 L0 69.2 Z" fill="#b050e0"/>
<path d="M0 20 L8 40 L0 60 Z" fill="#d070f0" opacity="0.7"/>
<path d="M20 0 L45 0 L35 9 Z" fill="#5a48d8" opacity="0.7"/>
<path d="M60 0 L69.4 0 L69.4 40 L61 20 Z" fill="#2a3cb0" opacity="0.7"/>
<path d="M10 60 L40 69.2 L10 69.2 Z M45 60 L69.4 55 L69.4 69.2 L55 69.2 Z" fill="#3a48d0" opacity="0.7"/>
<rect x="8.2" y="9.2" width="52" height="49.8" fill="#2a2b2e"/>
<rect x="8.2" y="9.2" width="52" height="2.3" fill="#6a6a6e"/>
<rect x="8.2" y="11.5" width="52" height="3.8" fill="#e8e8ea"/>
<g filter="url(#bpw)" fill="none" stroke-width="0.9">
<path d="M22 15 L22 24 L14 24 L14 55" stroke="#808488"/>
<path d="M11 15 L11 28 L18 28" stroke="#7a7e84"/>
<path d="M31 15 L31 26 L25 26 L25 45" stroke="#c89a40"/>
<path d="M38 15 L38 58" stroke="#3a9a6a"/>
<path d="M43 15 L43 38 L49 38 L49 60" stroke="#3a9ac8"/>
<path d="M52 15 L52 44 L56 44" stroke="#b068d0"/>
<path d="M57 15 L57 35" stroke="#9a9a9a"/>
<path d="M10 33 L36 33 L36 52" stroke="#70767e"/>
<path d="M36 46 L47 46 L47 59" stroke="#d8d8d8"/>
<path d="M12 44 L20 44" stroke="#3a9ad8"/>
<path d="M35 50 L44 50 L44 57" stroke="#b83a3a"/>
<path d="M20 52 L28 52" stroke="#c89a40"/>
</g>
</svg>
<div class="a" style="left:273.95px;top:380.6px;width:69.4px;height:5px;background:linear-gradient(90deg,#7a40d0,#4a3ec8 20%,#3a3cc0 70%,#5a40c8)"></div>
<div class="a" style="left:355.85px;top:380.6px;width:69.4px;height:5px;background:linear-gradient(90deg,#1a2a60,#203a80 50%,#182858)"></div>
<div class="a" style="left:437.25px;top:380.6px;width:69.4px;height:5px;background:linear-gradient(90deg,#5a1040,#3a1238 50%,#30144a)"></div>
<div class="a" style="left:518.95px;top:380.6px;width:69.4px;height:5px;background:linear-gradient(90deg,#d4d4d4 0,#d4d4d4 25%,#f4f4f4 25%,#f4f4f4 80%,#d4d4d4 80%)"></div>
<div class="a" style="left:603.3px;top:58.5px;width:1.3px;height:327px;background:#f3f4f4"></div>
<div class="a" style="left:607.7px;top:124.2px;width:2.6px;height:132.2px;background:#a3a5a7;border-radius:1.3px"></div>
</body></html>
